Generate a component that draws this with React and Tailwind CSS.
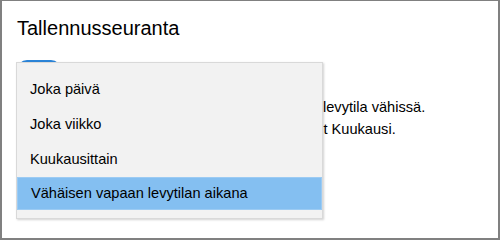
export default function App() {
  const items = ["Joka päivä", "Joka viikko", "Kuukausittain"];
  return (
    <div className="relative w-[500px] h-[240px] overflow-hidden bg-white border-[#808080] border-t border-l-2 border-r-2 border-b-2 font-['Liberation_Sans',Arial,sans-serif] text-black">
      <div className="pl-[15px] pt-[15px]">
        <h1 className="text-[20px] leading-[24px] font-normal">Tallennusseuranta</h1>
        <div className="mt-[20px] w-[44px] h-[20px] rounded-full bg-[#2b84d8]" />
        <div className="mt-[17px] text-[14.6px] leading-[21.5px] whitespace-nowrap">
          <div className="ml-[306px]">levytila vähissä.</div>
          <div className="ml-[306.5px]">t Kuukausi.</div>
        </div>
      </div>
      <div className="absolute left-[14px] top-[61px] w-[307px] bg-[#f2f2f2] border border-[#d9d9d9] shadow-[1px_1px_2px_rgba(0,0,0,0.18)] pt-[9px] pb-[8px] text-[14.6px]">
        {items.map((t) => (
          <div key={t} className="h-[35px] flex items-center pl-[13px] whitespace-nowrap">
            {t}
          </div>
        ))}
        <div className="h-[33px] flex items-center pl-[13px] pt-[1px] bg-[#84bff1] border border-[#9ccbf3] whitespace-nowrap">
          Vähäisen vapaan levytilan aikana
        </div>
      </div>
    </div>
  );
}
